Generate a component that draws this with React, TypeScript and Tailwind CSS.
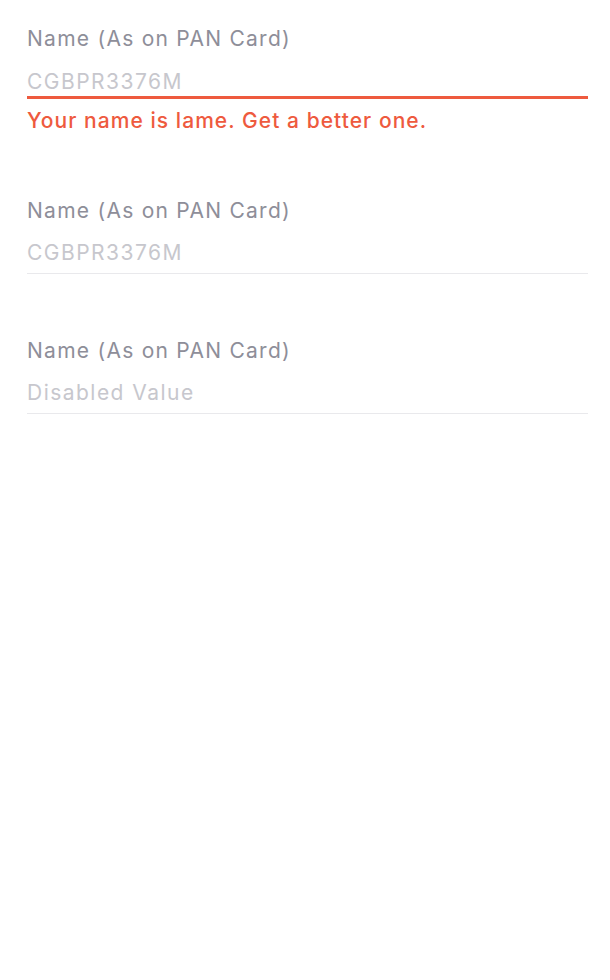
const FONT = "font-['Inter','Noto_Sans',sans-serif]";

function Field({
  label,
  value,
  error,
  className = '',
}: {
  label: string;
  value: string;
  error?: string;
  className?: string;
}) {
  return (
    <div className={`flex flex-col ${className}`}>
      <div className="h-[28px] text-[21px] leading-[28px] tracking-[0.06em] text-[#8e8e99]">{label}</div>
      <div
        className={`text-[21px] leading-[26px] tracking-[0.07em] text-[#c7c7cd] ${
          error
            ? 'mt-[16px] border-b-[3px] border-[#ee5a3e] pb-[1px]'
            : 'mt-[15px] border-b border-[#e9e9ec] pb-[7px]'
        }`}
      >
        {value}
      </div>
      {error && (
        <div className="mt-[8px] text-[21px] font-medium leading-[28px] tracking-[0.05em] text-[#ee5a3e]">
          {error}
        </div>
      )}
    </div>
  );
}

export default function App() {
  return (
    <div className={`min-h-screen w-[610px] bg-white ${FONT}`}>
      <div className="flex flex-col pl-[27px] pr-[22px] pt-[25px]">
        <Field
          label="Name (As on PAN Card)"
          value="CGBPR3376M"
          error="Your name is lame. Get a better one."
        />
        <Field className="mt-[62px]" label="Name (As on PAN Card)" value="CGBPR3376M" />
        <Field className="mt-[63px]" label="Name (As on PAN Card)" value="Disabled Value" />
      </div>
    </div>
  );
}
